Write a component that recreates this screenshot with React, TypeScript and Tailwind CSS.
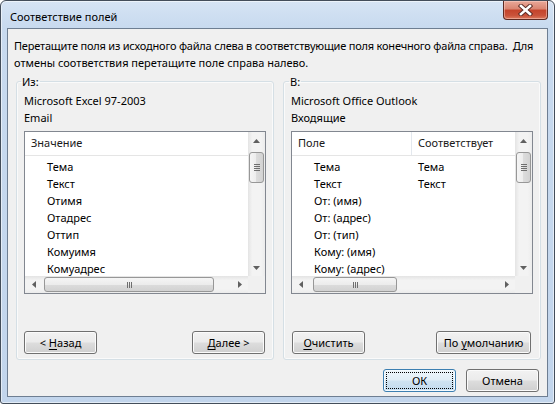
import React from "react";

const leftRows = ["Тема", "Текст", "Отимя", "Отадрес", "Оттип", "Комуимя", "Комуадрес"];
const rightRows: [string, string][] = [
  ["Тема", "Тема"],
  ["Текст", "Текст"],
  ["От: (имя)", ""],
  ["От: (адрес)", ""],
  ["От: (тип)", ""],
  ["Кому: (имя)", ""],
  ["Кому: (адрес)", ""],
];

function Tri({ dir }: { dir: "up" | "down" | "left" | "right" }) {
  const pts =
    dir === "up"
      ? "0,4 3.5,0 7,4"
      : dir === "down"
      ? "0,0 7,0 3.5,4"
      : dir === "left"
      ? "4,0 4,7 0,3.5"
      : "0,0 0,7 4,3.5";
  const w = dir === "up" || dir === "down" ? 7 : 4;
  const h = dir === "up" || dir === "down" ? 4 : 7;
  return (
    <svg width={w} height={h} viewBox={`0 0 ${w} ${h}`}>
      <polygon points={pts} fill="#606060" />
    </svg>
  );
}

function VScroll() {
  return (
    <div className="flex w-[17px] flex-col bg-[linear-gradient(90deg,#e4e4e4,#f3f3f3_25%,#f3f3f3_75%,#ececec)]">
      <div className="flex h-[17px] items-center justify-center">
        <Tri dir="up" />
      </div>
      <div className="mx-[1px] mt-[3px] flex h-[31px] flex-col items-center justify-center gap-[1px] rounded-[3px] border border-[#979797] bg-[linear-gradient(90deg,#f5f5f5,#ececec_50%,#dcdcdc_50%,#d2d2d2)]">
        <div className="h-[1px] w-[6px] bg-[#6e6e6e]" />
        <div className="h-[1px] w-[6px] bg-[#6e6e6e]" />
        <div className="h-[1px] w-[6px] bg-[#6e6e6e]" />
        <div className="h-[1px] w-[6px] bg-[#6e6e6e]" />
      </div>
      <div className="flex-1" />
      <div className="flex h-[17px] items-center justify-center">
        <Tri dir="down" />
      </div>
    </div>
  );
}

function HScroll({ wide }: { wide: boolean }) {
  return (
    <div className="flex h-[17px] flex-1 items-stretch bg-[linear-gradient(180deg,#e4e4e4,#f3f3f3_25%,#f3f3f3_75%,#ececec)]">
      <div className="flex w-[17px] items-center justify-center">
        <Tri dir="left" />
      </div>
      <div
        className={
          wide
            ? "my-[1px] ml-[2px] flex w-[170px] items-center justify-center gap-[1px] rounded-[3px] border border-[#979797] bg-[linear-gradient(180deg,#f5f5f5,#ececec_50%,#dcdcdc_50%,#d2d2d2)]"
            : "my-[1px] ml-[4px] flex w-[84px] items-center justify-center gap-[1px] rounded-[3px] border border-[#979797] bg-[linear-gradient(180deg,#f5f5f5,#ececec_50%,#dcdcdc_50%,#d2d2d2)]"
        }
      >
        <div className="h-[6px] w-[1px] bg-[#6e6e6e]" />
        <div className="h-[6px] w-[1px] bg-[#6e6e6e]" />
        <div className="h-[6px] w-[1px] bg-[#6e6e6e]" />
      </div>
      <div className="flex-1" />
      <div className="flex w-[17px] items-center justify-center">
        <Tri dir="right" />
      </div>
    </div>
  );
}

function ListFrame({ children, wide }: { children: React.ReactNode; wide: boolean }) {
  return (
    <div className="mt-[5px] flex h-[163px] w-[242px] flex-col border border-[#828790] bg-white">
      <div className="flex min-h-0 flex-1">
        <div className="flex min-w-0 flex-1 flex-col overflow-hidden">{children}</div>
        <VScroll />
      </div>
      <div className="flex h-[17px]">
        <HScroll wide={wide} />
        <div className="w-[17px] bg-[#f0f0f0]" />
      </div>
    </div>
  );
}

function Btn({ children, w = "w-[73px]" }: { children: React.ReactNode; w?: string }) {
  return (
    <button
      className={`${w} h-[23px] rounded-[3px] border border-[#707070] bg-[linear-gradient(180deg,#f2f2f2_0%,#ebebeb_48%,#dddddd_52%,#cfcfcf_100%)] text-[11px] leading-none text-black shadow-[inset_0_0_0_1px_#fbfbfb]`}
    >
      {children}
    </button>
  );
}

export default function App() {
  return (
    <div className="h-[404px] w-[555px] overflow-hidden bg-white font-['Noto_Sans',sans-serif] text-[11px] text-black">
      <div className="relative flex h-full flex-col rounded-t-[6px] rounded-b-[3px] border border-[#434d5a] bg-[linear-gradient(180deg,#d6e4f4_0px,#c8daef_26px,#c2d5ec_100%)] shadow-[inset_0_0_0_1px_rgba(255,255,255,0.55)]">
        <div className="flex h-[27px] shrink-0 items-center pl-[9px] pt-[3px] text-[11px] leading-none">
          Соответствие полей
        </div>
        <div className="absolute right-[6px] top-0 flex h-[19px] w-[45px] items-center justify-center rounded-b-[4px] border border-t-0 border-[#5e2a22] bg-[linear-gradient(180deg,#e9a899_0%,#d98470_45%,#c4432b_50%,#c9523a_80%,#dc7a5e_100%)] shadow-[inset_0_0_0_1px_rgba(255,220,210,0.45)]">
          <svg width="15" height="12" viewBox="0 0 15 12">
            <path d="M3 2 L12 10 M12 2 L3 10" stroke="#5a2a24" strokeWidth="4.4" strokeLinecap="square" />
            <path d="M3 2 L12 10 M12 2 L3 10" stroke="#ffffff" strokeWidth="2.6" strokeLinecap="square" />
          </svg>
        </div>

        <div className="mx-[6px] mb-[6px] flex flex-1 flex-col border border-[#6e7e92] bg-[#f0f0f0]">
          <div className="whitespace-nowrap pl-[6px] pt-[8px] leading-[17px]">
            <div className="tracking-[-0.2px]">Перетащите поля из исходного файла слева в соответствующие поля конечного файла справа.&nbsp; Для</div>
            <div>отмены соответствия перетащите поле справа налево.</div>
          </div>

          <div className="mt-[3px] flex gap-[9px] pl-[8px] pr-[6px]">
            <fieldset className="flex h-[286px] w-[258px] flex-col rounded-[3px] border border-[#d5dfe5] px-[7px] pb-[5px] shadow-[inset_0_0_0_1px_#fafafa]">
              <legend className="-ml-[3px] px-[1px] leading-[15px]">Из:</legend>
              <div className="pt-[3px] leading-[17px]">Microsoft Excel 97-2003</div>
              <div className="leading-[17px]">Email</div>
              <ListFrame wide={true}>
                <div className="flex h-[24px] shrink-0 items-center border-b border-[#e5e5e5] pl-[6px] text-[#1a1a1a]">
                  Значение
                </div>
                <div className="pt-[2px]">
                  {leftRows.map((r) => (
                    <div key={r} className="h-[17px] pl-[22px] leading-[17px]">
                      {r}
                    </div>
                  ))}
                </div>
              </ListFrame>
              <div className="mt-auto flex justify-between pr-[1px]">
                <Btn>
                  &lt; <span className="underline underline-offset-2">Н</span>азад
                </Btn>
                <Btn>
                  <span className="underline underline-offset-2">Д</span>алее &gt;
                </Btn>
              </div>
            </fieldset>

            <fieldset className="flex h-[286px] w-[258px] flex-col rounded-[3px] border border-[#d5dfe5] px-[7px] pb-[5px] shadow-[inset_0_0_0_1px_#fafafa]">
              <legend className="-ml-[2px] px-[1px] leading-[15px]">В:</legend>
              <div className="pt-[3px] leading-[17px]">Microsoft Office Outlook</div>
              <div className="leading-[17px]">Входящие</div>
              <ListFrame wide={false}>
                <div className="flex h-[24px] shrink-0 items-stretch border-b border-[#e5e5e5] text-[#1a1a1a]">
                  <div className="flex w-[120px] items-center border-r border-[#e3e8ee] pl-[6px]">Поле</div>
                  <div className="flex items-center pl-[6px]">Соответствует</div>
                </div>
                <div className="pt-[2px]">
                  {rightRows.map(([a, b]) => (
                    <div key={a} className="flex h-[17px] leading-[17px]">
                      <div className="w-[126px] pl-[22px]">{a}</div>
                      <div>{b}</div>
                    </div>
                  ))}
                </div>
              </ListFrame>
              <div className="mt-auto flex justify-between pr-[2px] pl-[1px]">
                <Btn>
                  <span className="underline underline-offset-2">О</span>чистить
                </Btn>
                <Btn w="w-[95px]">
                  По <span className="underline underline-offset-2">у</span>молчанию
                </Btn>
              </div>
            </fieldset>
          </div>

          <div className="mt-[9px] flex justify-end gap-[10px] pr-[8px]">
            <button className="h-[23px] w-[73px] rounded-[3px] border border-[#3c7fb1] bg-[linear-gradient(180deg,#eef6fb_0%,#e1eef7_48%,#cfe3f1_52%,#c3dbee_100%)] text-[11px] leading-none text-black shadow-[inset_0_0_0_1px_#f4fafe] outline-1 outline-offset-[-4px] outline-dotted outline-black">
              ОК
            </button>
            <Btn>Отмена</Btn>
          </div>
        </div>
      </div>
    </div>
  );
}
